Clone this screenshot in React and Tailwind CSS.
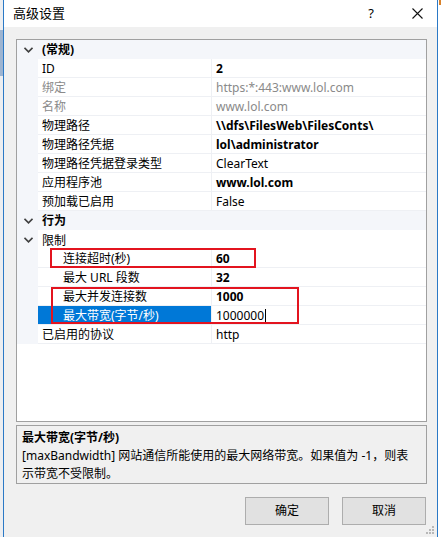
import React from 'react'

const font = { fontFamily: '"Noto Sans", "Noto Sans CJK SC", sans-serif' }

function Chevron() {
  return (
    <svg width="9" height="6" viewBox="0 0 9 6" className="block">
      <polyline points="0.5,0.8 4.5,4.8 8.5,0.8" fill="none" stroke="#404040" strokeWidth="1.6" />
    </svg>
  )
}

function Category({ label }) {
  return (
    <div className="flex h-[19px] items-center bg-[#f4f6fa] pt-px">
      <div className="flex w-[21px] shrink-0 justify-center pl-[2px]">
        <Chevron />
      </div>
      <div className="font-bold text-[12px] text-black pl-[4px]">{label}</div>
    </div>
  )
}

function Row({ name, value, bold, gray, sub, selected, cursor }) {
  return (
    <div className="flex h-[19px]">
      <div className="w-[21px] shrink-0 bg-[#f4f6fa]" />
      <div
        className={
          'flex w-[174px] shrink-0 items-center border-b border-r border-[#eef0f4] pt-[2px] text-[12px] ' +
          (sub ? 'pl-[25px] ' : 'pl-[4px] ') +
          (selected ? 'bg-[#0078d7] text-white' : gray ? 'bg-white text-[#8a8a8a]' : 'bg-white text-black')
        }
      >
        {name}
      </div>
      <div
        className={
          'flex flex-1 items-center border-b border-[#eef0f4] bg-white pl-[4px] pt-[2px] text-[12px] ' +
          (bold ? 'font-bold text-black' : gray ? 'text-[#8a8a8a]' : 'text-black')
        }
      >
        {value}
        {cursor && <span className="ml-[1px] inline-block h-[14px] w-px bg-black" />}
      </div>
    </div>
  )
}

export default function App() {
  return (
    <div className="relative flex h-[537px] w-[441px] overflow-hidden bg-white" style={font}>
      {/* strip of background window on the left */}
      <div className="flex w-[3px] shrink-0 flex-col bg-[#eceef1]">
        <div className="mt-[30px] h-[46px] bg-[#9db4d1]" />
      </div>
      <div className="flex w-[435px] shrink-0 flex-col border-x border-[#2b79c6] bg-[#f0f0f0]">
        {/* title bar */}
        <div className="flex h-[27px] shrink-0 items-center bg-white pl-[9px] pr-[14px]">
          <div className="flex-1 text-[13px] text-black">高级设置</div>
          <div className="mr-[38px] text-[13px] text-black">?</div>
          <svg width="11" height="11" viewBox="0 0 11 11">
            <path d="M0.5 0.5 L10.5 10.5 M10.5 0.5 L0.5 10.5" stroke="#111" strokeWidth="1.1" />
          </svg>
        </div>

        {/* property grid */}
        <div className="relative ml-[12px] mt-[12px] flex h-[383px] w-[411px] flex-col border border-[#a0a0a0] bg-white">
          <Category label="(常规)" />
          <Row name="ID" value="2" bold />
          <Row name="绑定" value="https:*:443:www.lol.com" gray />
          <Row name="名称" value="www.lol.com" gray />
          <Row name="物理路径" value="\\dfs\FilesWeb\FilesConts\" bold />
          <Row name="物理路径凭据" value="lol\administrator" bold />
          <Row name="物理路径凭据登录类型" value="ClearText" />
          <Row name="应用程序池" value="www.lol.com" bold />
          <Row name="预加载已启用" value="False" />
          <Category label="行为" />
          <div className="flex h-[19px] items-center bg-[#f4f6fa]">
            <div className="flex w-[21px] shrink-0 justify-center pl-[2px]">
              <Chevron />
            </div>
            <div className="flex h-full flex-1 items-center bg-white pl-[4px] pt-[2px] text-[12px] text-black">限制</div>
          </div>
          <Row name="连接超时(秒)" value="60" bold sub />
          <Row name="最大 URL 段数" value="32" bold sub />
          <Row name="最大并发连接数" value="1000" bold sub />
          <Row name="最大带宽(字节/秒)" value="1000000" sub selected cursor />
          <Row name="已启用的协议" value="http" />

          {/* red annotation boxes */}
          <div className="absolute left-[33px] top-[208px] h-[20px] w-[206px] border-2 border-[#e3141f]" />
          <div className="absolute left-[34px] top-[247px] h-[37px] w-[248px] border-2 border-[#e3141f]" />
        </div>

        {/* description */}
        <div className="ml-[12px] mt-[3px] h-[59px] w-[411px] border border-[#a0a0a0] px-[5px] pt-[3px] text-[12px] leading-[18px] text-black">
          <div className="font-bold">最大带宽(字节/秒)</div>
          <div>
            [maxBandwidth] 网站通信所能使用的最大网络带宽。如果值为 -1，则表
            <br />
            示带宽不受限制。
          </div>
        </div>

        {/* buttons */}
        <div className="mt-[13px] flex justify-end gap-[13px] pr-[11px]">
          <button className="h-[28px] w-[84px] border border-[#adadad] bg-[#e1e1e1] text-[12px] text-black">确定</button>
          <button className="h-[28px] w-[84px] border border-[#adadad] bg-[#e1e1e1] text-[12px] text-black">取消</button>
        </div>

        {/* resize grip */}
        <div className="mt-auto flex justify-end pb-[2px] pr-[2px]">
          <svg width="9" height="9" viewBox="0 0 9 9">
            <rect x="6" y="0" width="2" height="2" fill="#b8b8b8" />
            <rect x="3" y="3" width="2" height="2" fill="#b8b8b8" />
            <rect x="6" y="3" width="2" height="2" fill="#b8b8b8" />
            <rect x="0" y="6" width="2" height="2" fill="#b8b8b8" />
            <rect x="3" y="6" width="2" height="2" fill="#b8b8b8" />
            <rect x="6" y="6" width="2" height="2" fill="#b8b8b8" />
          </svg>
        </div>
      </div>
      <div className="relative w-[3px] shrink-0 bg-white">
        <div className="ml-[1px] h-[5px] w-[2px] bg-[#d9822b]" />
      </div>
    </div>
  )
}
